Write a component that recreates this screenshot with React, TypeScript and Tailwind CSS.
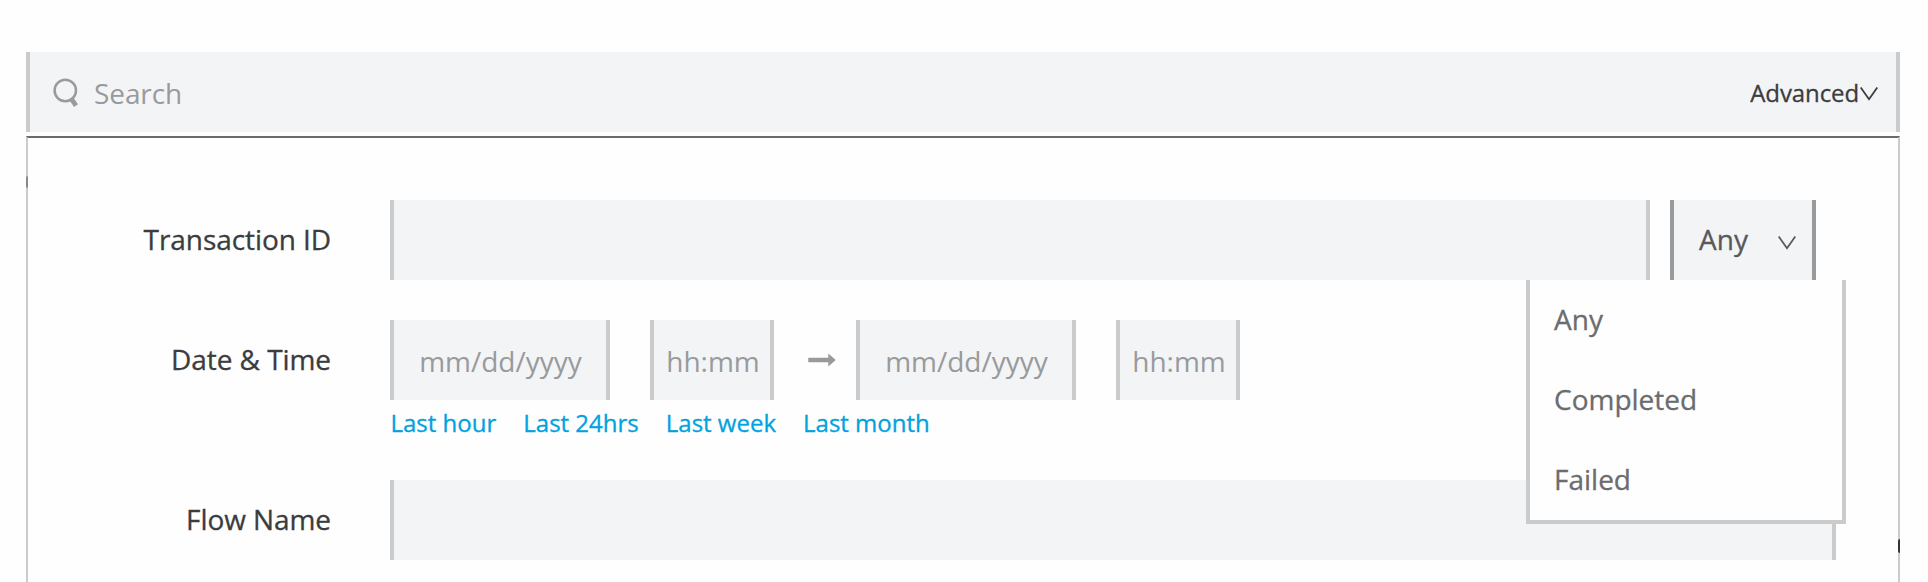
import type { ReactNode } from "react";

function Field({ className = "", children }: { className?: string; children?: ReactNode }) {
  return (
    <div
      className={`flex h-20 shrink-0 items-center border-x-4 border-[#c9cbcd] bg-[#f3f4f6] text-[28px] leading-[38px] text-[#999a9c] ${className}`}
    >
      {children}
    </div>
  );
}

function Row({ label, children }: { label: string; children: ReactNode }) {
  return (
    <div className="flex">
      <div className="mr-[59px] flex h-20 w-[303px] shrink-0 items-center justify-end pb-[2px] text-[28px] leading-[38px] tracking-[-0.07px] whitespace-nowrap text-[#3b3c3e] [-webkit-text-stroke:0.3px_#3b3c3e]">
        {label}
      </div>
      {children}
    </div>
  );
}

function Chevron({ className = "" }: { className?: string }) {
  return (
    <svg className={`shrink-0 ${className}`} width="18" height="14" viewBox="0 0 18 14" fill="none" stroke="currentColor" strokeWidth="1.8">
      <path d="M0.7 0.5 L9 12.2 L17.3 0.5" />
    </svg>
  );
}

const ranges = ["Last hour", "Last 24hrs", "Last week", "Last month"];
const options = ["Any", "Completed", "Failed"];

export default function App() {
  return (
    <div className="h-[582px] w-[1928px] overflow-hidden bg-[#fefefe] px-[26px] pt-[52px] pr-[28px] font-['Open_Sans',sans-serif]">
      <div className="flex h-20 items-center border-x-4 border-[#c9cbcd] bg-[#f3f4f6]">
        <svg className="mt-px ml-[23px] shrink-0" width="26" height="30" viewBox="0 0 26 30" fill="none" stroke="#999a9c">
          <circle cx="12.3" cy="12.5" r="10.7" strokeWidth="2.5" />
          <path d="M17.8 20 L23 27.6" strokeWidth="4.8" />
        </svg>
        <span className="ml-[15px] pt-[2px] text-[28px] leading-[38px] tracking-[-0.1px] text-[#999a9c]">Search</span>
        <span className="ml-auto pt-[2px] text-2xl tracking-[-0.1px] text-[#3b3c3e] [-webkit-text-stroke:0.3px_#3b3c3e]">Advanced</span>
        <Chevron className="mt-[3px] mr-[18px] ml-px text-[#3b3c3e]" />
      </div>

      <div className="relative mt-1 flex h-[460px] flex-col border-x-2 border-t-2 border-x-[#c9cbcd] border-t-[#696a6c] pt-[62px]">
        <div className="absolute top-[38px] -left-[2px] h-3 w-[2px] rounded-l-full bg-[#88898b]" />
        <div className="absolute top-[401px] -right-[2px] h-[14px] w-[2px] rounded-l-full bg-[#333436]" />

        <Row label="Transaction ID">
          <Field className="w-[1260px]" />
          <div className="relative ml-5">
            <div className="flex h-20 w-[146px] items-center border-x-4 border-[#999a9c] bg-[#f3f4f6] text-[#58595b]">
              <span className="ml-[25px] pb-[2px] text-[28px] leading-[38px] [-webkit-text-stroke:0.3px_#58595b]">Any</span>
              <Chevron className="mt-[6px] mr-4 ml-auto" />
            </div>
            <ul className="absolute top-20 right-[-30px] z-10 h-[244px] w-[320px] border-x-4 border-b-4 border-[#c9cbcd] bg-[#fefefe]">
              {options.map((option) => (
                <li
                  key={option}
                  className="flex h-20 items-center pb-[2px] pl-6 text-[28px] leading-[38px] text-[#6b6c6e] [-webkit-text-stroke:0.3px_#6b6c6e]"
                >
                  {option}
                </li>
              ))}
            </ul>
          </div>
        </Row>

        <div className="mt-10 h-[160px]">
          <Row label="Date & Time">
            <div>
              <div className="flex items-center">
                <Field className="w-[220px] justify-center pt-[2px] pl-px">mm/dd/yyyy</Field>
                <Field className="ml-10 w-[124px] justify-center pt-[2px] pl-[2px]">hh:mm</Field>
                <svg className="mr-5 ml-[34px] shrink-0" width="28" height="14" viewBox="0 0 28 14" fill="#999a9c">
                  <path d="M0.3 4.8 H20.3 V0.4 L27.8 7 L20.3 13.6 V9.2 H0.3 Z" />
                </svg>
                <Field className="w-[220px] justify-center pt-[2px] pl-px">mm/dd/yyyy</Field>
                <Field className="ml-10 w-[124px] justify-center pt-[2px] pl-[2px]">hh:mm</Field>
              </div>
              <div className="mt-[7px] ml-[0.5px] flex gap-[27px] text-2xl text-[#00a2df] [-webkit-text-stroke:0.3px_#00a2df]">
                {ranges.map((range) => (
                  <a key={range}>{range}</a>
                ))}
              </div>
            </div>
          </Row>
        </div>

        <Row label="Flow Name">
          <Field className="w-[1446px]" />
        </Row>
      </div>
    </div>
  );
}
